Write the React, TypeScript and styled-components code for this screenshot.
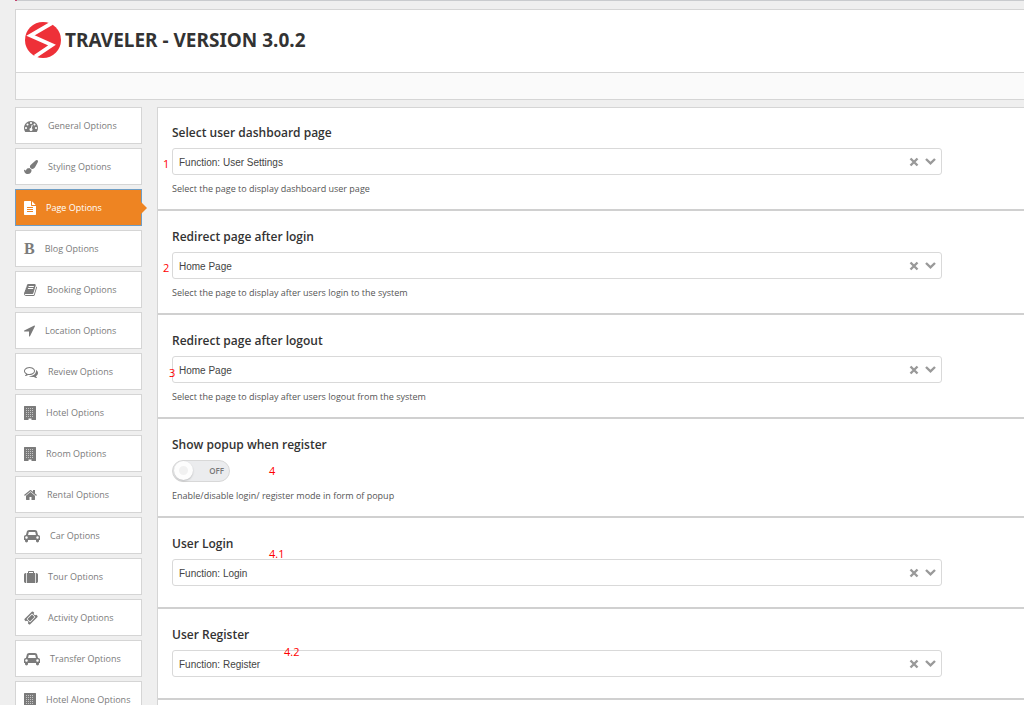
import React from 'react';
import styled, { createGlobalStyle, css } from 'styled-components';

const GlobalStyle = createGlobalStyle`
  * { box-sizing: border-box; }
  body {
    margin: 0;
    background: #efefef;
    font-family: "Open Sans", "Noto Sans", sans-serif;
    color: #333;
  }
`;

const Page = styled.div`
  height: 100vh;
  overflow: hidden;
  padding-left: 15px;
`;

const NoticeEdge = styled.div`
  height: 1px;
  border-left: 2px solid #c2446f;
  background: #c9cbce;
  margin-bottom: 8px;
`;

const Header = styled.header`
  border: 1px solid #d5d5d5;
  border-right: 0;
  background: #fff;
`;

const Brand = styled.div`
  display: flex;
  align-items: center;
  gap: 4px;
  height: 62px;
  padding: 0 9px 2px;
`;

const Title = styled.h1`
  margin: 0;
  font-family: "Noto Sans", "Open Sans", sans-serif;
  font-size: 19px;
  line-height: 24px;
  font-weight: 700;
  color: #333;
`;

const Toolbar = styled.div`
  height: 27px;
  border-top: 1px solid #d5d5d5;
  background: #fafafa;
`;

const Columns = styled.div`
  display: flex;
  align-items: flex-start;
  gap: 15px;
  padding-top: 7px;
`;

const Sidebar = styled.nav`
  flex: 0 0 127px;
  min-width: 0;
  display: flex;
  flex-direction: column;
  gap: 4px;
`;

const Tab = styled.a<{ $active?: boolean }>`
  position: relative;
  display: flex;
  align-items: center;
  gap: 10px;
  height: 37px;
  padding: 0 8px;
  border: 1px solid #d5d5d5;
  background: #fff;
  color: #7b7b7b;
  font-size: 9px;
  line-height: 16px;
  white-space: nowrap;
  text-decoration: none;

  ${(p) =>
    p.$active &&
    css`
      background: #ee8422;
      border-color: #6f9dc4;
      color: #fff;

      &::after {
        content: '';
        position: absolute;
        left: 100%;
        top: 12px;
        border: 6px solid transparent;
        border-left-color: #ee8422;
        border-right-width: 0;
      }
    `}
`;

const TabText = styled.span`
  padding-top: 1px;
`;

const SerifB = styled.span`
  font: 700 16px/16px "Liberation Serif", serif;
`;

const Panel = styled.main`
  flex: 1;
  min-width: 0;
  border: 1px solid #d5d5d5;
  border-right: 0;
  background: #fff;
`;

const Section = styled.section<{ $bare?: boolean }>`
  position: relative;
  padding: 15px 82px ${(p) => (p.$bare ? 21 : 12)}px 14px;

  & + & {
    border-top: 2px solid #d0d0d0;
    padding-top: 16px;
  }
`;

const Label = styled.label`
  display: block;
  margin-bottom: 5px;
  font-size: 12px;
  line-height: 20px;
  font-weight: 600;
  color: #333;
`;

const Field = styled.div`
  display: flex;
  align-items: center;
  height: 27px;
  padding-right: 5px;
  border: 1px solid #d9d9d9;
  border-radius: 3px;
  color: #999;
`;

const Select = styled.select`
  flex: 1;
  min-width: 0;
  height: 25px;
  padding: 2px 6px 0;
  border: 0;
  outline: 0;
  appearance: none;
  background: transparent;
  color: #444;
  font: 10px/16px "Liberation Sans", Arial, sans-serif;
`;

const Clear = styled.button`
  display: flex;
  margin-right: 6px;
  padding: 0;
  border: 0;
  background: none;
  color: inherit;
`;

const Hint = styled.p`
  margin: 6px 0 0;
  font-size: 9px;
  line-height: 16px;
  white-space: nowrap;
  color: #555;
`;

const Switch = styled.span`
  position: relative;
  display: flex;
  align-items: center;
  justify-content: flex-end;
  width: 58px;
  height: 22px;
  padding-right: 5px;
  border: 1px solid #d8d8d8;
  border-radius: 11px;
  background: #ebecee;
  font-size: 8px;
  line-height: 12px;
  font-weight: 600;
  color: #777;
`;

const SwitchInput = styled.input`
  position: absolute;
  inset: 0;
  width: 100%;
  height: 100%;
  margin: 0;
  opacity: 0;
`;

const Knob = styled.span`
  position: absolute;
  left: 1px;
  top: 0;
  width: 19px;
  height: 19px;
  border: 5px solid #fdfdfd;
  border-radius: 50%;
  background: #f1f1f1;
  box-shadow: 0 1px 2px rgba(0, 0, 0, 0.2);
`;

const Note = styled.span<{ $x: number; $y: number }>`
  position: absolute;
  left: ${(p) => p.$x}px;
  top: ${(p) => p.$y}px;
  font-size: 11px;
  line-height: 14px;
  color: #f00;
`;

type Shape = { w: number; box: string; d: string };

const windows = [0, 1, 2, 3, 4]
  .flatMap((r) => [0, 1, 2, 3].map((c) => `M${400 + c * 256} ${256 + r * 256}v96h96v-96z`))
  .join('');

const shapes: Record<string, Shape> = {
  gauge: {
    w: 14,
    box: '0 0 1792 1792',
    d: 'M384 1152q0-53-37.5-90.5t-90.5-37.5-90.5 37.5-37.5 90.5 37.5 90.5 90.5 37.5 90.5-37.5 37.5-90.5zm192-448q0-53-37.5-90.5t-90.5-37.5-90.5 37.5-37.5 90.5 37.5 90.5 90.5 37.5 90.5-37.5 37.5-90.5zm428 481l101-382q6-26-7.5-48.5t-38.5-29.5-48 6.5-30 39.5l-101 382q-60 5-107 43.5t-63 98.5q-20 77 20 146t117 89 146-20 89-117q16-60-6-117t-72-91zm660-33q0-53-37.5-90.5t-90.5-37.5-90.5 37.5-37.5 90.5 37.5 90.5 90.5 37.5 90.5-37.5 37.5-90.5zm-640-640q0-53-37.5-90.5t-90.5-37.5-90.5 37.5-37.5 90.5 37.5 90.5 90.5 37.5 90.5-37.5 37.5-90.5zm448 192q0-53-37.5-90.5t-90.5-37.5-90.5 37.5-37.5 90.5 37.5 90.5 90.5 37.5 90.5-37.5 37.5-90.5zm320 448q0 261-141 483-19 29-54 29h-1402q-35 0-54-29-141-221-141-483 0-182 71-348t191-286 286-191 348-71 348 71 286 191 191 286 71 348z',
  },
  brush: {
    w: 14,
    box: '0 0 1792 1792',
    d: 'M1615 0q70 0 122.5 46.5t52.5 116.5q0 63-45 151-332 629-465 752-97 91-218 91-126 0-216.5-92.5t-90.5-219.5q0-128 92-212l638-579q59-54 130-54zm-909 1034q39 76 106.5 130t150.5 76l1 71q4 213-129.5 347t-348.5 134q-123 0-218-46.5t-152.5-127.5-86.5-183-29-220q7 5 41 30t62 44.5 59 36.5 46 17q41 0 55-37 25-66 57.5-112.5t69.5-76 88-47.5 103-25.5 125-10.5z',
  },
  file: {
    w: 12,
    box: '128 0 1536 1792',
    d: 'M1596 476q14 14 28 36h-472v-472q22 14 36 28zm-476 164h544v1056q0 40-28 68t-68 28h-1344q-40 0-68-28t-28-68v-1600q0-40 28-68t68-28h800v544q0 40 28 68t68 28zm160 736v-64q0-14-9-23t-23-9h-704q-14 0-23 9t-9 23v64q0 14 9 23t23 9h704q14 0 23-9t9-23zm0-256v-64q0-14-9-23t-23-9h-704q-14 0-23 9t-9 23v64q0 14 9 23t23 9h704q14 0 23-9t9-23zm0-256v-64q0-14-9-23t-23-9h-704q-14 0-23 9t-9 23v64q0 14 9 23t23 9h704q14 0 23-9t9-23z',
  },
  book: {
    w: 13,
    box: '64 0 1664 1792',
    d: 'M1703 478q40 57 18 129l-275 906q-19 64-76.5 107.5t-122.5 43.5h-923q-77 0-148.5-53.5t-99.5-131.5q-24-67-2-127 0-4 3-27t4-37q1-8-3-21.5t-3-19.5q2-11 8-21t16.5-23.5 16.5-23.5q23-38 45-91.5t30-91.5q3-10 .5-30t-.5-28q3-11 17-28t17-23q21-36 42-92t25-90q1-9-2.5-32t.5-28q4-13 22-30.5t22-22.5q19-26 42.5-84.5t27.5-96.5q1-8-3-25.5t-2-26.5q2-8 9-18t18-23 17-21q8-12 16.5-30.5t15-35 16-36 19.5-32 26.5-23.5 36-11.5 47.5 5.5l-1 3q38-9 51-9h761q74 0 114 56t18 130l-274 906q-36 119-71.5 153.5t-128.5 34.5h-869q-27 0-38 15-11 16-1 43 24 70 144 70h923q29 0 56-15.5t35-41.5l300-987q7-22 5-57 38 15 59 43zm-1064 2q-4 13 2 22.5t20 9.5h608q13 0 25.5-9.5t16.5-22.5l21-64q4-13-2-22.5t-20-9.5h-608q-13 0-25.5 9.5t-16.5 22.5zm-83 256q-4 13 2 22.5t20 9.5h608q13 0 25.5-9.5t16.5-22.5l21-64q4-13-2-22.5t-20-9.5h-608q-13 0-25.5 9.5t-16.5 22.5z',
  },
  arrow: {
    w: 11,
    box: '192 128 1408 1664',
    d: 'M1593 349l-640 1280q-17 35-57 35-5 0-15-2-22-5-35.5-22.5t-13.5-39.5v-576h-576q-22 0-39.5-13.5t-22.5-35.5 4-42 29-30l1280-640q13-7 29-7 27 0 45 19 15 14 18.5 34.5t-6.5 39.5z',
  },
  comments: {
    w: 14,
    box: '0 0 1792 1792',
    d: 'M704 384q-153 0-286 52t-211.5 141-78.5 191q0 82 53 158t149 132l97 56-35 84q34-20 62-39l44-31 53 10q78 14 153 14 153 0 286-52t211.5-141 78.5-191-78.5-191-211.5-141-286-52zm0-128q191 0 353.5 68.5t256.5 186.5 94 257-94 257-256.5 186.5-353.5 68.5q-86 0-176-16-124 88-278 128-36 9-86 16h-3q-11 0-20.5-8t-11.5-21q-1-3-1-6.5t.5-6.5 2-6l2.5-5 3.5-5.5 4-5 4.5-5 4-4.5q5-6 23-25t26-29.5 22.5-29 25-38.5 20.5-44q-124-72-195-177t-71-224q0-139 94-257t256.5-186.5 353.5-68.5zm822 1169q10 24 20.5 44t25 38.5 22.5 29 26 29.5 23 25q1 1 4 4.5t4.5 5 4 5 3.5 5.5l2.5 5 2 6 .5 6.5-1 6.5q-3 14-13 22t-22 7q-50-7-86-16-154-40-278-128-90 16-176 16-271 0-472-132 58 4 88 4 161 0 309-45t264-129q125-92 192-212t67-254q0-77-23-152 129 71 204 178t75 230q0 120-71 224.5t-195 176.5z',
  },
  building: {
    w: 12,
    box: '128 0 1536 1792',
    d: `M192 0h1408q64 0 64 64v1664q0 64-64 64h-512v-192h-384v192h-512q-64 0-64-64v-1664q0-64 64-64z${windows}`,
  },
  home: {
    w: 13,
    box: '64 0 1664 1792',
    d: 'M1472 992v480q0 26-19 45t-45 19h-384v-384h-256v384h-384q-26 0-45-19t-19-45v-480q0-1 .5-3t.5-3l575-474 575 474q1 2 1 6zm223-69l-62 74q-8 9-21 11h-3q-13 0-21-7l-692-577-692 577q-12 8-24 7-13-2-21-11l-62-74q-8-10-7-23.5t11-21.5l719-599q32-26 76-26t76 26l244 204v-195q0-14 9-23t23-9h192q14 0 23 9t9 23v408l219 182q10 8 11 21.5t-7 23.5z',
  },
  car: {
    w: 16,
    box: '0 0 2048 1792',
    d: 'M480 1088q0-66-47-113t-113-47-113 47-47 113 47 113 113 47 113-47 47-113zm36-320h1016l-89-357q-2-8-14-17.5t-21-9.5h-768q-9 0-21 9.5t-14 17.5zm1372 320q0-66-47-113t-113-47-113 47-47 113 47 113 113 47 113-47 47-113zm160-96v384q0 14-9 23t-23 9h-96v128q0 80-56 136t-136 56-136-56-56-136v-128h-1024v128q0 80-56 136t-136 56-136-56-56-136v-128h-96q-14 0-23-9t-9-23v-384q0-93 65.5-158.5t158.5-65.5h28l105-419q23-94 104-157.5t179-63.5h768q98 0 179 63.5t104 157.5l105 419h28q93 0 158.5 65.5t65.5 158.5z',
  },
  suitcase: {
    w: 14,
    box: '0 0 1792 1792',
    d: 'M640 384h512v-128h-512zM288 384v1280h-64q-92 0-158-66t-66-158v-832q0-92 66-158t158-66zM1408 384v1280h-1024v-1280h128v-160q0-40 28-68t68-28h576q40 0 68 28t28 68v160zM1792 608v832q0 92-66 158t-158 66h-64v-1280h64q92 0 158 66t66 158z',
  },
  ticket: {
    w: 14,
    box: '0 0 1792 1792',
    d: 'M1024 452l316 316-572 572-316-316zm-211 979l618-618q19-19 19-45t-19-45l-362-362q-18-18-45-18t-45 18l-618 618q-19 19-19 45t19 45l362 362q18 18 45 18t45-18zm889-637l-907 908q-37 37-90.5 37t-90.5-37l-126-126q56-56 56-136t-56-136-136-56-136 56l-125-126q-37-37-37-90.5t37-90.5l907-906q37-37 90.5-37t90.5 37l125 125q-56 56-56 136t56 136 136 56 136-56l126 125q37 37 37 90.5t-37 90.5z',
  },
};

const Icon = ({ name }: { name: string }) => {
  const s = shapes[name];
  return (
    <svg width={s.w} height={14} viewBox={s.box} fill="currentColor" fillRule="evenodd" aria-hidden="true">
      <path d={s.d} />
    </svg>
  );
};

const tabs: [string, string][] = [
  ['gauge', 'General Options'],
  ['brush', 'Styling Options'],
  ['file', 'Page Options'],
  ['bold', 'Blog Options'],
  ['book', 'Booking Options'],
  ['arrow', 'Location Options'],
  ['comments', 'Review Options'],
  ['building', 'Hotel Options'],
  ['building', 'Room Options'],
  ['home', 'Rental Options'],
  ['car', 'Car Options'],
  ['suitcase', 'Tour Options'],
  ['ticket', 'Activity Options'],
  ['car', 'Transfer Options'],
  ['building', 'Hotel Alone Options'],
];

type PageSelectProps = {
  id: string;
  label: string;
  value: string;
  hint?: string;
  note: string;
  x: number;
  y: number;
};

const PageSelect = ({ id, label, value, hint, note, x, y }: PageSelectProps) => (
  <Section $bare={!hint}>
    <Label htmlFor={id}>{label}</Label>
    <Field>
      <Select id={id} defaultValue={value}>
        <option>{value}</option>
      </Select>
      <Clear type="button" aria-label="Clear">
        <svg width="10" height="10" viewBox="0 0 10 10" stroke="currentColor" strokeWidth="2.4">
          <path d="M1.5 1.5l7 7M8.5 1.5l-7 7" />
        </svg>
      </Clear>
      <svg width="11" height="10" viewBox="0 0 11 10" fill="none" stroke="currentColor" strokeWidth="2.4">
        <path d="M1 2l4.5 4.3L10 2" />
      </svg>
    </Field>
    {hint && <Hint>{hint}</Hint>}
    <Note $x={x} $y={y}>{note}</Note>
  </Section>
);

export default function App() {
  return (
    <Page>
      <GlobalStyle />
      <NoticeEdge />
      <Header>
        <Brand>
          <svg width="36" height="36" viewBox="0 0 36 36" aria-hidden="true">
            <circle cx="18" cy="18" r="18" fill="#ee3038" />
            <path d="M27 1L5.5 13.5 27 23 10 34.500" fill="none" stroke="#fff" strokeWidth="3.8" />
          </svg>
          <Title>TRAVELER - VERSION 3.0.2</Title>
        </Brand>
        <Toolbar />
      </Header>
      <Columns>
        <Sidebar>
          {tabs.map(([icon, text]) => (
            <Tab key={text} href="#" $active={text === 'Page Options'}>
              {icon === 'bold' ? <SerifB aria-hidden="true">B</SerifB> : <Icon name={icon} />}
              <TabText>{text}</TabText>
            </Tab>
          ))}
        </Sidebar>
        <Panel>
          <PageSelect id="dashboard" label="Select user dashboard page" value="Function: User Settings" hint="Select the page to display dashboard user page" note="1" x={5} y={49} />
          <PageSelect id="login-redirect" label="Redirect page after login" value="Home Page" hint="Select the page to display after users login to the system" note="2" x={5} y={50} />
          <PageSelect id="logout-redirect" label="Redirect page after logout" value="Home Page" hint="Select the page to display after users logout from the system" note="3" x={11} y={51} />
          <Section>
            <Label htmlFor="popup">Show popup when register</Label>
            <Switch>
              <Knob />
              OFF
              <SwitchInput id="popup" type="checkbox" />
            </Switch>
            <Hint>Enable/disable login/ register mode in form of popup</Hint>
            <Note $x={111} $y={45}>4</Note>
          </Section>
          <PageSelect id="user-login" label="User Login" value="Function: Login" note="4.1" x={111} y={29} />
          <PageSelect id="user-register" label="User Register" value="Function: Register" note="4.2" x={126} y={36} />
          <Section />
        </Panel>
      </Columns>
    </Page>
  );
}
